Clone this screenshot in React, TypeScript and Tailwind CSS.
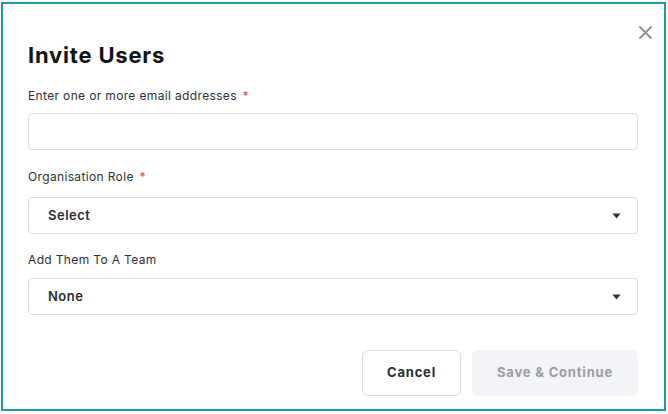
import React from "react";

const fieldLabel = "text-[12px] leading-[16px] tracking-[0.35px] text-[#2d2f36]";

const Caret = () => (
  <svg width="9" height="6" viewBox="0 0 9 6" className="shrink-0">
    <path d="M0.5 0.5 H8.5 L4.5 5.5 Z" fill="#2f3136" />
  </svg>
);

const SelectBox: React.FC<{ value: string }> = ({ value }) => (
  <div className="flex h-[37px] w-full items-center justify-between rounded-[4px] border border-[#dcdfe6] bg-white pl-[19px] pr-[16px]">
    <span className="text-[13px] font-semibold tracking-[0.5px] text-[#2a2c33]">{value}</span>
    <Caret />
  </div>
);

export default function App() {
  return (
    <div
      className="h-[414px] w-[668px] bg-white pb-[3px] pl-[1px] pr-[2px] pt-[2px]"
      style={{ fontFamily: "Inter, 'Noto Sans', sans-serif" }}
    >
      <div className="relative flex h-full flex-col border-2 border-[#1c9ba7] pl-[25px] pr-[26px] pt-[37px]">
        <button className="absolute right-[9px] top-[18px] flex h-[20px] w-[20px] items-center justify-center">
          <svg width="13" height="13" viewBox="0 0 13 13">
            <path d="M1 1 L12 12 M12 1 L1 12" stroke="#8a8f9a" strokeWidth="1.8" strokeLinecap="round" />
          </svg>
        </button>

        <h1 className="text-[22px] font-bold leading-[28px] tracking-[0.8px] text-[#121316]">Invite Users</h1>

        <label className={`${fieldLabel} mt-[19px]`}>
          Enter one or more email addresses <span className="ml-[2px] text-[#e5484d]">*</span>
        </label>
        <input className="mt-[9px] h-[37px] w-full rounded-[4px] border border-[#dcdfe6] bg-white px-[19px] outline-none" />

        <label className={`${fieldLabel} mt-[19px]`}>
          Organisation Role <span className="ml-[2px] text-[#e5484d]">*</span>
        </label>
        <div className="mt-[12px]">
          <SelectBox value="Select" />
        </div>

        <label className={`${fieldLabel} mt-[18px]`}>Add Them To A Team</label>
        <div className="mt-[10px]">
          <SelectBox value="None" />
        </div>

        <div className="mt-[35px] flex justify-end gap-[11px]">
          <button className="h-[46px] w-[99px] rounded-[6px] border border-[#d9dce3] bg-white text-[13px] font-bold tracking-[0.8px] text-[#2a2c33]">
            Cancel
          </button>
          <button className="h-[46px] w-[166px] rounded-[6px] bg-[#f3f4f8] text-[13px] font-bold tracking-[0.8px] text-[#9a9ca4]">
            Save &amp; Continue
          </button>
        </div>
      </div>
    </div>
  );
}
